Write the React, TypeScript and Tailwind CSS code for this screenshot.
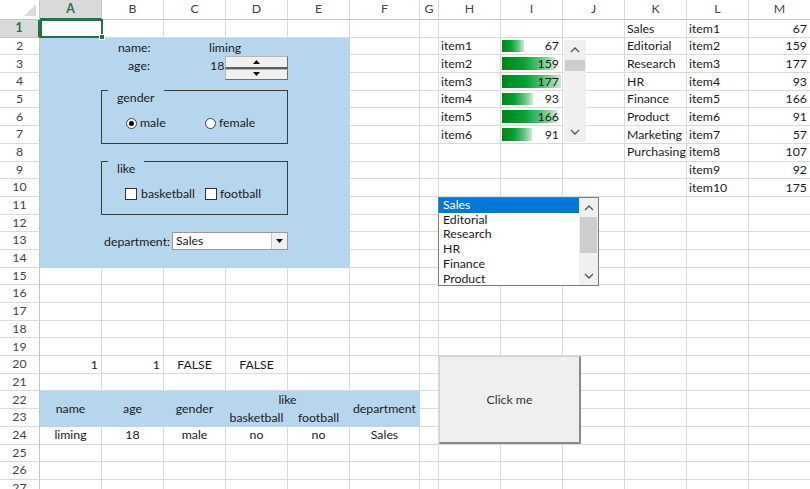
import React from "react";

type Cell = { t: string; a?: "l" | "r" | "c"; bar?: number };

const COLS = ["A", "B", "C", "D", "E", "F", "G", "H", "I", "J", "K", "L", "M"];
const ROWS = Array.from({ length: 27 }, (_, i) => i + 1);

const cells: Record<string, Cell> = {
  K1: { t: "Sales" }, L1: { t: "item1" }, M1: { t: "67", a: "r" },
  H2: { t: "item1" }, I2: { t: "67", a: "r", bar: 67 }, K2: { t: "Editorial" }, L2: { t: "item2" }, M2: { t: "159", a: "r" },
  H3: { t: "item2" }, I3: { t: "159", a: "r", bar: 159 }, K3: { t: "Research" }, L3: { t: "item3" }, M3: { t: "177", a: "r" },
  H4: { t: "item3" }, I4: { t: "177", a: "r", bar: 177 }, K4: { t: "HR" }, L4: { t: "item4" }, M4: { t: "93", a: "r" },
  H5: { t: "item4" }, I5: { t: "93", a: "r", bar: 93 }, K5: { t: "Finance" }, L5: { t: "item5" }, M5: { t: "166", a: "r" },
  H6: { t: "item5" }, I6: { t: "166", a: "r", bar: 166 }, K6: { t: "Product" }, L6: { t: "item6" }, M6: { t: "91", a: "r" },
  H7: { t: "item6" }, I7: { t: "91", a: "r", bar: 91 }, K7: { t: "Marketing" }, L7: { t: "item7" }, M7: { t: "57", a: "r" },
  K8: { t: "Purchasing" }, L8: { t: "item8" }, M8: { t: "107", a: "r" },
  L9: { t: "item9" }, M9: { t: "92", a: "r" },
  L10: { t: "item10" }, M10: { t: "175", a: "r" },
  A20: { t: "1", a: "r" }, B20: { t: "1", a: "r" }, C20: { t: "FALSE", a: "c" }, D20: { t: "FALSE", a: "c" },
  A22: { t: "name", a: "c" }, B22: { t: "age", a: "c" }, C22: { t: "gender", a: "c" },
  D22: { t: "like", a: "c" }, F22: { t: "department", a: "c" },
  D23: { t: "basketball", a: "c" }, E23: { t: "football", a: "c" },
  A24: { t: "liming", a: "c" }, B24: { t: "18", a: "c" }, C24: { t: "male", a: "c" },
  D24: { t: "no", a: "c" }, E24: { t: "no", a: "c" }, F24: { t: "Sales", a: "c" },
};

// merged cells: anchor -> span, covered cells are skipped
const rowSpan2 = ["A22", "B22", "C22", "F22"];
const colSpan2 = ["D22"];
const covered = ["A23", "B23", "C23", "F23", "E22"];

function isBlue(col: string, row: number) {
  const ci = COLS.indexOf(col);
  if (row >= 2 && row <= 14 && ci <= 4) return true;
  if ((row === 22 || row === 23) && ci <= 5) return true;
  return false;
}

function Chevron({ up }: { up?: boolean }) {
  return (
    <svg width="10" height="6" viewBox="0 0 10 6">
      <polyline
        points={up ? "1,5 5,1 9,5" : "1,1 5,5 9,1"}
        fill="none"
        stroke="#555"
        strokeWidth="1.3"
      />
    </svg>
  );
}

function Tri({ up }: { up?: boolean }) {
  return (
    <svg width="7" height="4" viewBox="0 0 7 4">
      <polygon points={up ? "0,4 3.5,0 7,4" : "0,0 7,0 3.5,4"} fill="#111" />
    </svg>
  );
}

function GridCell({ col, row }: { col: string; row: number }) {
  const key = `${col}${row}`;
  const c = cells[key];
  const blue = isBlue(col, row);
  const span = rowSpan2.includes(key) ? "row-span-2" : colSpan2.includes(key) ? "col-span-2" : "";
  const align = c?.a === "r" ? "justify-end pr-[3px]" : c?.a === "c" ? "justify-center" : "justify-start pl-[2px]";
  return (
    <div
      className={`relative flex items-center pt-[1px] overflow-visible whitespace-nowrap border-r border-b ${span} ${align} ${
        blue ? "bg-[#b6d6ee] border-[#b6d6ee]" : "bg-white border-[#dadada]"
      }`}
    >
      {c?.bar !== undefined && (
        <div
          className="absolute left-[1px] top-[2px] bottom-[2px] bg-[linear-gradient(to_right,#008519_0%,#06a035_40%,#5cc279_72%,#cdebd3_100%)]"
          style={{ width: `${(c.bar / 177) * 59}px` }}
        />
      )}
      {c && <span className="relative">{c.t}</span>}
    </div>
  );
}

export default function App() {
  return (
    <div className="relative w-[810px] h-[489px] overflow-hidden bg-white text-[12.3px] text-[#1a1a1a] font-['Lato','Liberation_Sans',sans-serif]">
      <div className="grid grid-cols-[40px_62px_62px_62px_62px_62px_70px_19px_62px_62px_62px_62px_62px_62px] grid-rows-[20px_repeat(27,17.7px)]">
        {/* corner */}
        <div className="relative bg-white border-r border-b border-[#c6c6c6]">
          <div className="absolute right-[3px] bottom-[3px] w-0 h-0 border-l-[12px] border-l-transparent border-b-[12px] border-b-[#dcdcdc]" />
        </div>
        {COLS.map((c) =>
          c === "A" ? (
            <div key={c} className="flex items-center justify-center bg-[#d9d9d9] border-r border-[#c6c6c6] border-b-2 border-b-[#217346] text-[#217346] font-bold">
              {c}
            </div>
          ) : (
            <div key={c} className="flex items-center justify-center bg-white border-r border-b border-[#dadada] border-b-[#c6c6c6] text-[#444]">
              {c}
            </div>
          )
        )}
        {ROWS.map((r) => (
          <React.Fragment key={r}>
            {r === 1 ? (
              <div className="flex items-center justify-center bg-[#d9d9d9] border-b border-[#c6c6c6] border-r-2 border-r-[#217346] text-[#217346] font-bold">
                {r}
              </div>
            ) : (
              <div className="flex items-center justify-center bg-white border-b border-r border-[#dadada] border-r-[#c6c6c6] text-[#444]">
                {r}
              </div>
            )}
            {COLS.filter((c) => !covered.includes(`${c}${r}`)).map((c) => (
              <GridCell key={c} col={c} row={r} />
            ))}
          </React.Fragment>
        ))}
      </div>

      {/* selected A1 */}
      <div className="absolute left-[40px] top-[19px] w-[63px] h-[19px] border-2 border-[#217346]" />
      <div className="absolute left-[99px] top-[34px] w-[6px] h-[6px] bg-[#217346] border border-white" />

      {/* form controls on the blue area */}
      <span className="absolute left-[118px] top-[39px]">name:</span>
      <span className="absolute left-[209px] top-[39px]">liming</span>
      <span className="absolute left-[128px] top-[57px]">age:</span>
      <span className="absolute left-[210px] top-[57px]">18</span>

      <div className="absolute left-[225px] top-[56px] w-[63px] h-[24px] flex flex-col">
        <div className="flex-1 flex items-center justify-center bg-[#f0f0f0] border border-[#b5b5b5] border-b-2 border-b-[#5e5e5e] border-r-[#6e6e6e]">
          <Tri up />
        </div>
        <div className="flex-1 flex items-center justify-center bg-[#f0f0f0] border border-[#b5b5b5] border-b-[#6e6e6e] border-r-[#6e6e6e]">
          <Tri />
        </div>
      </div>

      <div className="absolute left-[101px] top-[90px] w-[187px] h-[54px] border border-[#3c3c3c]">
        <span className="absolute left-[6px] top-[-2px] h-[18px] px-[9px] flex items-center bg-[#b6d6ee]">gender</span>
        <div className="absolute left-[24px] top-[23px] flex items-center gap-[3px]">
          <span className="w-[11px] h-[11px] rounded-full bg-white border border-[#444] flex items-center justify-center">
            <span className="w-[5px] h-[5px] rounded-full bg-black" />
          </span>
          <span>male</span>
        </div>
        <div className="absolute left-[103px] top-[23px] flex items-center gap-[3px]">
          <span className="w-[11px] h-[11px] rounded-full bg-white border border-[#444]" />
          <span>female</span>
        </div>
      </div>

      <div className="absolute left-[101px] top-[161px] w-[187px] h-[54px] border border-[#3c3c3c]">
        <span className="absolute left-[6px] top-[-2px] h-[18px] px-[9px] flex items-center bg-[#b6d6ee]">like</span>
        <div className="absolute left-[23px] top-[23px] flex items-center gap-[4px]">
          <span className="w-[12px] h-[12px] bg-white border border-[#333]" />
          <span>basketball</span>
        </div>
        <div className="absolute left-[103px] top-[23px] flex items-center gap-[3px]">
          <span className="w-[12px] h-[12px] bg-white border border-[#333]" />
          <span>football</span>
        </div>
      </div>

      <span className="absolute left-[104px] top-[233px]">department:</span>
      <div className="absolute left-[172px] top-[232px] w-[116px] h-[18px] flex bg-white border border-[#9a9a9a]">
        <span className="flex-1 pl-[3px] leading-[16px]">Sales</span>
        <div className="w-[16px] h-[16px] flex items-center justify-center bg-[#f0f0f0] border-l border-[#c8c8c8]">
          <Tri />
        </div>
      </div>

      {/* scroll bar in J */}
      <div className="absolute left-[564px] top-[40px] w-[22px] h-[102px] flex flex-col items-center bg-[#f0f0f0]">
        <div className="h-[20px] flex items-center justify-center"><Chevron up /></div>
        <div className="w-[20px] h-[11px] bg-[#cdcdcd]" />
        <div className="flex-1" />
        <div className="h-[20px] flex items-center justify-center"><Chevron /></div>
      </div>

      {/* list box */}
      <div className="absolute left-[438px] top-[197px] w-[161px] h-[89px] flex bg-white border border-[#7a7a7a] overflow-hidden">
        <div className="flex-1 flex flex-col leading-[14.7px]">
          <div className="bg-[#0078d7] text-white pl-[4px]">Sales</div>
          {["Editorial", "Research", "HR", "Finance", "Product"].map((d) => (
            <div key={d} className="pl-[4px]">{d}</div>
          ))}
        </div>
        <div className="w-[19px] flex flex-col items-center bg-[#f0f0f0]">
          <div className="h-[19px] flex items-center justify-center"><Chevron up /></div>
          <div className="w-[17px] h-[36px] bg-[#cdcdcd]" />
          <div className="flex-1" />
          <div className="h-[19px] flex items-center justify-center"><Chevron /></div>
        </div>
      </div>

      {/* button */}
      <div className="absolute left-[439px] top-[356px] w-[142px] h-[88px] flex items-center justify-center pt-[2px] bg-[#efefef] border border-[#d4d4d4] border-r-2 border-b-2 border-r-[#8a8a8a] border-b-[#8a8a8a] text-[#333]">
        Click me
      </div>
    </div>
  );
}
